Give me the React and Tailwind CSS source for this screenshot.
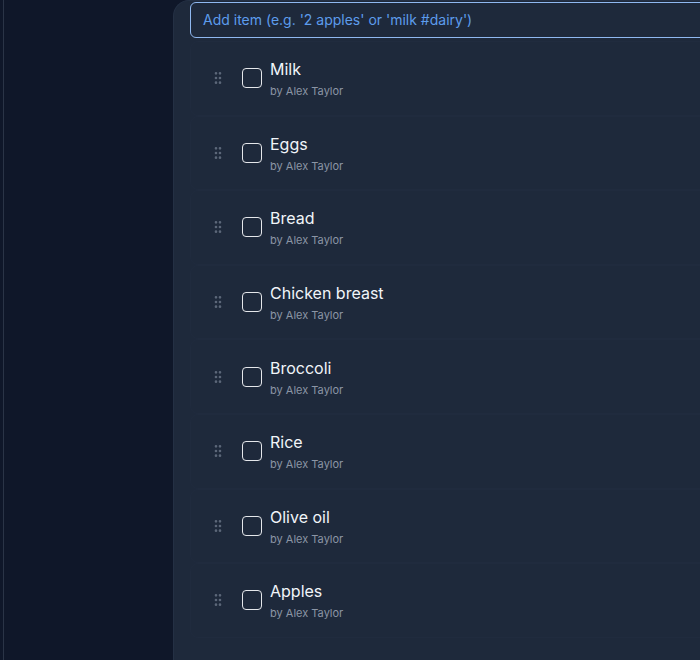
import React from "react";
import { GripVertical } from "lucide-react";

const items = ["Milk", "Eggs", "Bread", "Chicken breast", "Broccoli", "Rice", "Olive oil", "Apples"];

export default function App() {
  return (
    <div className="flex h-[660px] w-[700px] overflow-hidden bg-[#0f1729]" style={{ fontFamily: "Inter, 'Noto Sans', sans-serif" }}>
      <div className="w-[3px] shrink-0" />
      <div className="w-px shrink-0 bg-[#2a3446]" />
      <div className="w-[169px] shrink-0" />
      <div className="flex-1 min-w-0 rounded-tl-2xl border-l border-t border-[#243044] bg-[#1e293b] pl-4 pt-px">
        <div className="w-[540px]">
          <div className="flex h-[36px] items-center rounded-md border border-[#8fb8f0] px-3 text-sm text-[#5d9cec]">
            Add item (e.g. '2 apples' or 'milk #dairy')
          </div>
          <div className="mt-[3px] flex flex-col">
            {items.map((name) => (
              <div key={name} className="flex h-[74.6px] items-center rounded-lg border border-[#202b3e] pl-[19px]">
                <GripVertical size={16} className="text-[#5c6779]" strokeWidth={2} />
                <div className="ml-4 h-5 w-5 shrink-0 rounded-[4px] border-[1.5px] border-[#e5e7eb]" />
                <div className="ml-2 flex flex-col">
                  <span className="text-base leading-6 text-[#f1f5f9]">{name}</span>
                  <span className="mt-[2px] text-[11px] leading-4 text-[#8b95a5]">by Alex Taylor</span>
                </div>
              </div>
            ))}
          </div>
        </div>
      </div>
    </div>
  );
}
